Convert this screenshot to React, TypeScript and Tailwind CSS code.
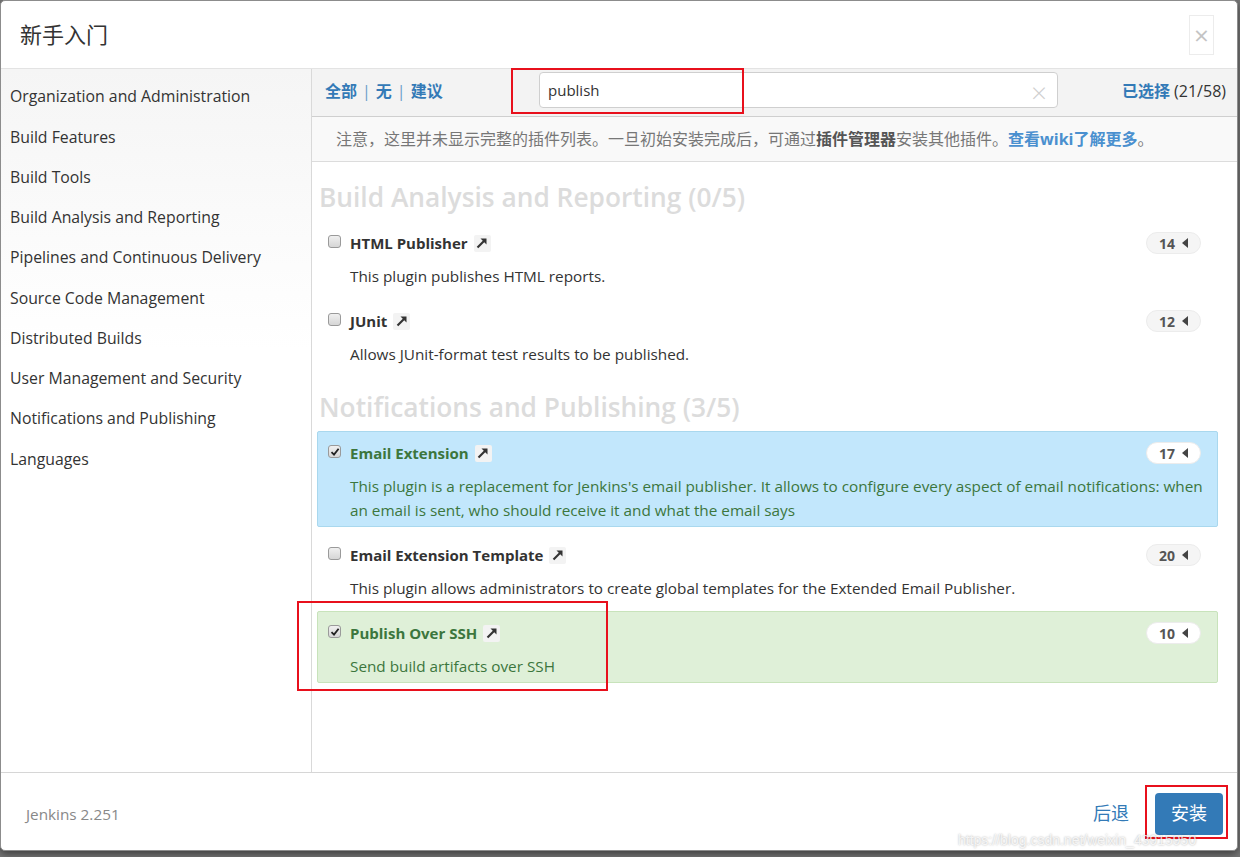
import React from "react";

const FONT = '"Open Sans", "Noto Sans CJK SC", sans-serif';

function Ext() {
  return (
    <span className="inline-flex items-center justify-center w-[17px] h-[17px] ml-[6px] bg-[#f3f3f3] rounded-[2px]">
      <svg width="12" height="12" viewBox="0 0 12 12">
        <line x1="1.5" y1="10.5" x2="8" y2="4" stroke="#333" strokeWidth="2.2" />
        <polygon points="4.5,1.5 10.5,1.5 10.5,7.5" fill="#333" />
      </svg>
    </span>
  );
}

function Check({ checked }: { checked?: boolean }) {
  return (
    <span className="inline-flex items-center justify-center w-[13px] h-[13px] rounded-[3px] border border-[#9a9a9a] bg-linear-to-b from-[#f0f0f0] to-[#d6d6d6] mt-[3px]">
      {checked && (
        <svg width="10" height="10" viewBox="0 0 10 10">
          <path d="M1.5 5.2 L4 7.6 L8.6 1.8" stroke="#222" strokeWidth="1.8" fill="none" />
        </svg>
      )}
    </span>
  );
}

function Badge({ n, white }: { n: string; white?: boolean }) {
  return (
    <span
      className={
        "inline-flex items-center gap-[7px] h-[22px] px-[12px] mr-[8px] rounded-full text-[14px] font-bold text-[#555] border border-[#ececec] " +
        (white ? "bg-white" : "bg-[#f5f5f5]")
      }
    >
      {n}
      <svg width="6" height="10" viewBox="0 0 6 10">
        <polygon points="6,0 6,10 0,5" fill="#444" />
      </svg>
    </span>
  );
}

type Row = {
  name: string;
  desc: React.ReactNode;
  n: string;
  state?: "info" | "success";
};

function PluginRow({ r }: { r: Row }) {
  const box =
    r.state === "info"
      ? "bg-[#c2e7fc] border-[#a9d8ee]"
      : r.state === "success"
      ? "bg-[#dff0d8] border-[#c8e3bb]"
      : "border-transparent";
  const title = r.state ? "text-[#3c763d]" : "text-[#333]";
  const desc = r.state ? "text-[#3c763d]" : "text-[#333]";
  return (
    <div className={"border rounded-[2px] pl-[10px] pr-[8px] pt-[10px] pb-[4px] " + box}>
      <div className="flex items-start">
        <Check checked={!!r.state} />
        <div className="flex-1 ml-[9px]">
          <div className="flex items-center h-[22px] justify-between">
            <div className={"flex items-center text-[15px] font-bold " + title}>
              {r.name}
              <Ext />
            </div>
            <Badge n={r.n} white={!!r.state} />
          </div>
          <div className={"mt-[10px] text-[15.3px] leading-[24px] " + desc}>{r.desc}</div>
        </div>
      </div>
    </div>
  );
}

export default function App() {
  const side = [
    "Organization and Administration",
    "Build Features",
    "Build Tools",
    "Build Analysis and Reporting",
    "Pipelines and Continuous Delivery",
    "Source Code Management",
    "Distributed Builds",
    "User Management and Security",
    "Notifications and Publishing",
    "Languages",
  ];
  const g1: Row[] = [
    { name: "HTML Publisher", desc: "This plugin publishes HTML reports.", n: "14" },
    { name: "JUnit", desc: "Allows JUnit-format test results to be published.", n: "12" },
  ];
  const g2: Row[] = [
    {
      name: "Email Extension",
      desc:
        "This plugin is a replacement for Jenkins's email publisher. It allows to configure every aspect of email notifications: when an email is sent, who should receive it and what the email says",
      n: "17",
      state: "info",
    },
    {
      name: "Email Extension Template",
      desc: "This plugin allows administrators to create global templates for the Extended Email Publisher.",
      n: "20",
    },
    { name: "Publish Over SSH", desc: "Send build artifacts over SSH", n: "10", state: "success" },
  ];

  return (
    <div className="relative w-[1240px] h-[857px] bg-[#777] overflow-hidden" style={{ fontFamily: FONT }}>
      <div className="w-[1238px] h-[851px] bg-white rounded-[5px] border border-[#8c8c8c] flex flex-col overflow-hidden shadow-[0_3px_8px_rgba(0,0,0,0.5)]">
        {/* header */}
        <div className="h-[68px] shrink-0 flex items-center justify-between pl-[19px] pr-[23px] border-b border-[#e3e3e3]">
          <div className="text-[22px] text-[#333]">新手入门</div>
          <div className="w-[25px] h-[40px] border border-[#ececec] flex items-center justify-center text-[#c4c4c4] text-[26px] leading-none">
            ×
          </div>
        </div>
        {/* body */}
        <div className="flex-1 flex min-h-0">
          <div className="w-[311px] shrink-0 border-r border-[#d9d9d9] bg-linear-to-b from-[#f5f5f5] to-white to-40% pt-[8px]">
            {side.map((s) => (
              <div key={s} className="h-[40.25px] flex items-center pl-[9px] text-[15.8px] text-[#333]">
                {s}
              </div>
            ))}
          </div>
          <div className="flex-1 flex flex-col min-w-0">
            <div className="h-[48px] shrink-0 flex items-center bg-[#f3f3f3] border-b border-[#cfcfcf] pl-[13px] pr-[11px]">
              <div className="flex items-center text-[16px] font-bold text-[#337ab7] w-[214px] mb-[4px]">
                <span>全部</span>
                <span className="mx-[5px] font-normal text-[#6a9cc9]">|</span>
                <span>无</span>
                <span className="mx-[5px] font-normal text-[#6a9cc9]">|</span>
                <span>建议</span>
              </div>
              <div className="w-[519px] h-[36px] mb-[5px] bg-white border border-[#cfcfcf] rounded-[4px] flex items-center justify-between pl-[8px] pr-[10px]">
                <span className="text-[15px] text-[#333]">publish</span>
                <span className="text-[#cfcfcf] text-[28px] font-light leading-none mt-[4px]">×</span>
              </div>
              <div className="flex-1 text-right text-[16px] mb-[4px]">
                <span className="text-[#337ab7] font-bold">已选择</span>
                <span className="text-[#333]"> (21/58)</span>
              </div>
            </div>
            <div className="h-[45px] shrink-0 flex items-center bg-[#f9f9f9] border-b border-[#dcdcdc] pl-[24px] text-[16px] text-[#777]">
              注意，这里并未显示完整的插件列表。一旦初始安装完成后，可通过<b className="text-[#555]">插件管理器</b>安装其他插件。
              <span className="text-[#4a90cf] font-bold">查看wiki了解更多</span>。
            </div>
            <div className="flex-1 pl-[5px] pr-[19px]">
              <div className="mt-[18px] h-[36px] pl-[2px] flex items-center text-[26.3px] font-semibold text-[#dcdcdc]">
                Build Analysis and Reporting (0/5)
              </div>
              <div className="mt-[5px] flex flex-col gap-[6px]">
                {g1.map((r) => (
                  <PluginRow key={r.name} r={r} />
                ))}
              </div>
              <div className="mt-[19px] h-[36px] pl-[2px] flex items-center text-[26.3px] font-semibold text-[#dcdcdc]">
                Notifications and Publishing (3/5)
              </div>
              <div className="mt-[5px] flex flex-col gap-[6px]">
                {g2.map((r) => (
                  <PluginRow key={r.name} r={r} />
                ))}
              </div>
            </div>
          </div>
        </div>
        {/* footer */}
        <div className="h-[78px] shrink-0 border-t border-[#d6d6d6] flex items-center justify-between pl-[25px] pr-[14px]">
          <div className="text-[15.3px] text-[#888] mt-[6px]">Jenkins 2.251</div>
          <div className="flex items-center mt-[4px]">
            <span className="text-[18px] text-[#337ab7] mr-[26px]">后退</span>
            <span className="w-[68px] h-[42px] rounded-[4px] bg-[#337ab7] text-white text-[18px] flex items-center justify-center">
              安装
            </span>
          </div>
        </div>
      </div>

      {/* annotations */}
      <div className="absolute left-[511px] top-[68px] w-[233px] h-[46px] border-2 border-[#e8101c]" />
      <div className="absolute left-[297px] top-[601px] w-[311px] h-[90px] border-2 border-[#e8101c]" />
      <div className="absolute left-[1145px] top-[785px] w-[83px] h-[54px] border-2 border-[#e8101c]" />
      <div
        className="absolute left-[958px] top-[830px] text-[14px] text-white/80 [text-shadow:0_0_2px_rgba(0,0,0,0.35)]"
        style={{ fontFamily: '"Liberation Sans", sans-serif' }}
      >
        https://blog.csdn.net/weixin_43915950
      </div>
    </div>
  );
}
